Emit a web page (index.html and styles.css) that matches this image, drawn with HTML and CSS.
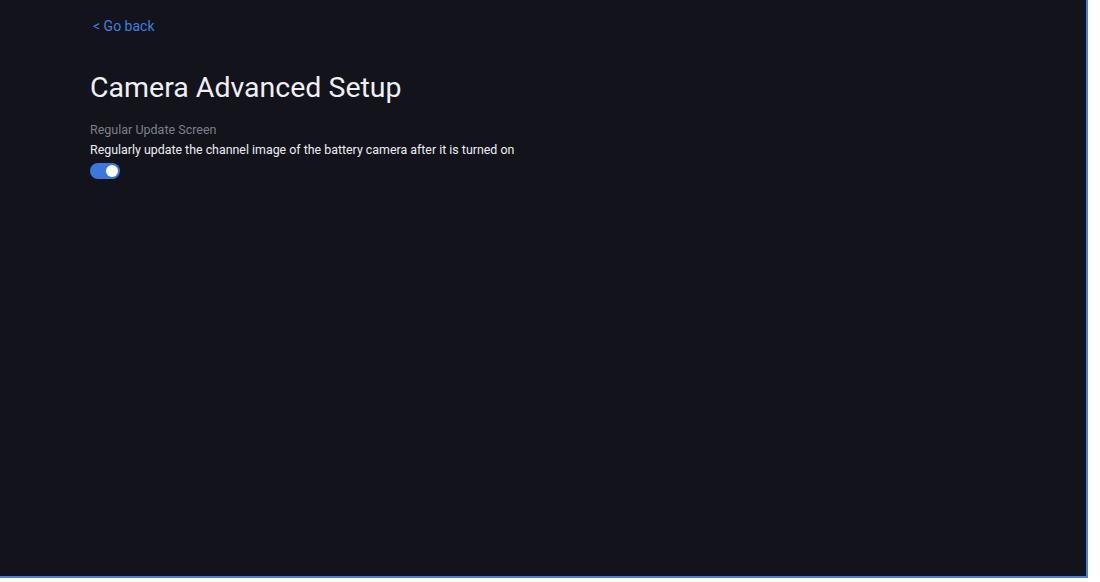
FILE: index.html
```html
<!DOCTYPE html>
<html>
<head>
<meta charset="utf-8">
<link rel="stylesheet" href="styles.css">
</head>
<body>
<div class="screen">
  <div class="content">
    <a class="back" href="#">&lt; Go back</a>
    <h1 class="title">Camera Advanced Setup</h1>
    <div class="setting">
      <div class="label">Regular Update Screen</div>
      <div class="desc">Regularly update the channel image of the battery camera after it is turned on</div>
      <div class="toggle on"><span class="knob"></span></div>
    </div>
  </div>
</div>
</body>
</html>
```
FILE: styles.css
```css
html, body {
  margin: 0;
  padding: 0;
  background: #ffffff;
}
body {
  font-family: Roboto, "Liberation Sans", sans-serif;
}
.screen {
  width: 1086px;
  height: 576px;
  background: #12131b;
  border-right: 2px solid #4a7fd8;
  border-bottom: 2px solid #4a7fd8;
  box-sizing: content-box;
}
.content {
  padding: 17px 0 0 90px;
  display: flex;
  flex-direction: column;
  align-items: flex-start;
}
.back {
  color: #3f7fe0;
  font-size: 14px;
  text-decoration: none;
  margin-left: 3px;
  line-height: 18px;
}
.title {
  margin: 35px 0 0 0;
  font-size: 28.5px;
  font-weight: 400;
  color: #eef0f4;
  line-height: 36px;
}
.setting {
  margin-top: 15px;
  display: flex;
  flex-direction: column;
  align-items: flex-start;
}
.label {
  color: #7d808a;
  font-size: 12.5px;
  line-height: 18px;
}
.desc {
  color: #eceef2;
  font-size: 12.4px;
  line-height: 18px;
  margin-top: 2px;
}
.toggle {
  margin-top: 4px;
  width: 30px;
  height: 16px;
  border-radius: 8px;
  background: #3a78de;
  position: relative;
}
.toggle .knob {
  position: absolute;
  top: 2px;
  right: 2px;
  width: 12px;
  height: 12px;
  border-radius: 50%;
  background: #ffffff;
}
```
